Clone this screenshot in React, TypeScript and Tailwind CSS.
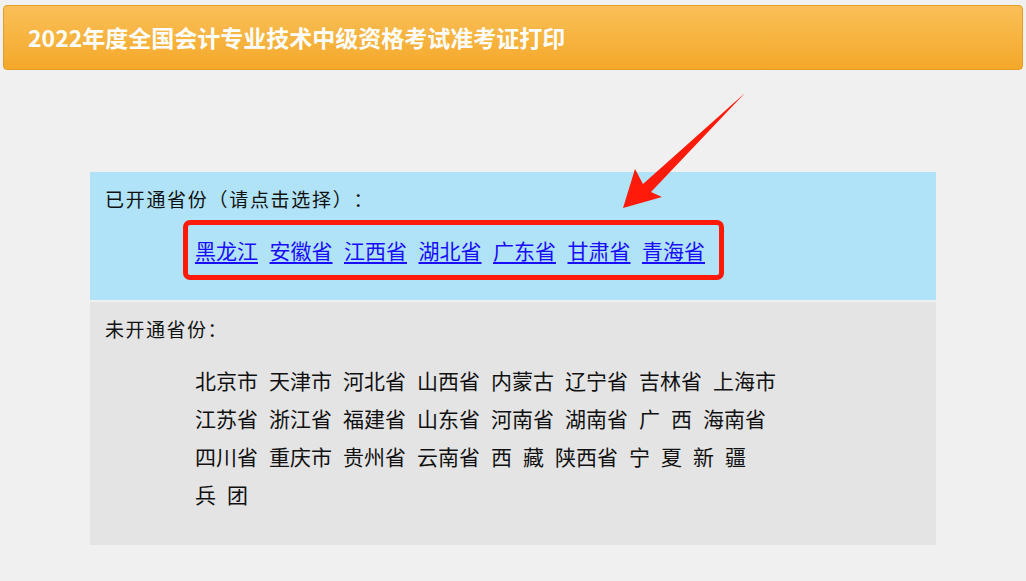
import React from "react"

const opened = ["黑龙江", "安徽省", "江西省", "湖北省", "广东省", "甘肃省", "青海省"]

const closedRows = [
  ["北京市", "天津市", "河北省", "山西省", "内蒙古", "辽宁省", "吉林省", "上海市"],
  ["江苏省", "浙江省", "福建省", "山东省", "河南省", "湖南省", "广", "西", "海南省"],
  ["四川省", "重庆市", "贵州省", "云南省", "西", "藏", "陕西省", "宁", "夏", "新", "疆"],
  ["兵", "团"],
]

const font = { fontFamily: '"Noto Sans CJK SC", "Noto Sans", sans-serif' }

export default function App() {
  return (
    <div lang="zh-CN" className="relative min-h-[581px] w-[1026px] bg-[#f0f0f0] pt-[5px]" style={font}>
      {/* Title bar */}
      <div className="mx-[3px] flex h-[65px] items-center rounded-[4px] border border-[#e59c22] bg-gradient-to-b from-[#f9bf58] via-[#f7b440] to-[#f4a829] pl-[24px]">
        <h1 className="text-[23px] font-bold leading-none text-white">
          2022年度全国会计专业技术中级资格考试准考证打印
        </h1>
      </div>

      {/* Province panel */}
      <div className="ml-[90px] mt-[102px] flex w-[846px] flex-col gap-[2px]">
        <div className="bg-[#b0e2f8] pb-[20px] pl-[15px] pt-[13px]">
          <p className="text-[19px] leading-[28px] tracking-[1.7px] text-[#111] [text-spacing-trim:space-all]">
            已开通省份（请点击选择）：
          </p>
          <div className="ml-[78px] mt-[7px] flex h-[60px] w-[541px] items-center gap-[11.5px] rounded-[7px] border-[5px] border-[#ff1a0a] pl-[7px]">
            {opened.map((p) => (
              <a
                key={p}
                href="#"
                className="text-[21px] leading-none text-[#1a0dff] underline underline-offset-[3px]"
              >
                {p}
              </a>
            ))}
          </div>
        </div>

        <div className="bg-[#e4e4e4] pb-[32px] pl-[15px] pt-[13px]">
          <p className="text-[19px] leading-[28px] tracking-[1.5px] text-[#111]">
            未开通省份<span className="tracking-normal">：</span>
          </p>
          <div className="ml-[90px] mt-[18px] flex flex-col">
            {closedRows.map((row, i) => (
              <div key={i} className="flex h-[38px] items-center gap-[11px] text-[21px] leading-none text-[#111]">
                {row.map((p, j) => (
                  <span key={j}>{p}</span>
                ))}
              </div>
            ))}
          </div>
        </div>
      </div>

      {/* Annotation arrow */}
      <svg className="pointer-events-none absolute left-0 top-0" width="1026" height="581" viewBox="0 0 1026 581">
        <polygon
          points="745,93 643,184 635,169 623,208 662,197 651,192"
          fill="#ff1a0a"
        />
      </svg>
    </div>
  )
}
